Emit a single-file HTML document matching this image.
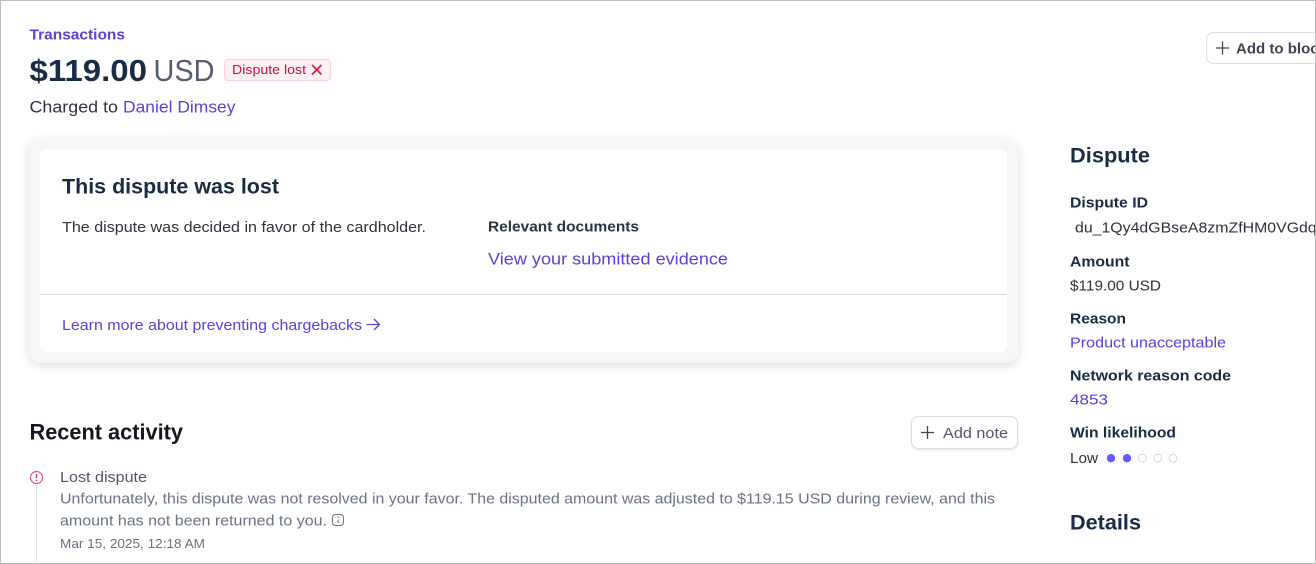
<!DOCTYPE html>
<html lang="en">
<head>
<meta charset="utf-8">
<title>Dispute</title>
<style>
html,body{margin:0;padding:0;background:#fff;width:1316px;height:564px;overflow:hidden}
#p{position:relative;width:1316px;height:564px;overflow:hidden}
.outer{position:absolute;left:29px;top:138.5px;width:988.5px;height:224.5px;border-radius:12px;background:#f5f6f8;box-shadow:0 3px 9px rgba(60,66,87,.15),0 0 18px rgba(60,66,87,.04)}
.inner{position:absolute;left:40px;top:149px;width:966.5px;height:203px;border-radius:6px;background:#fff}
.frame{position:absolute;left:0;top:0;border:1px solid #bdbdbd;width:1314px;height:562px;pointer-events:none}
svg{position:absolute;left:0;top:0}
text{font-family:"Liberation Sans",sans-serif}
.b{font-weight:700}
.nav{fill:#1a2b45}
.link{fill:#5b41d9}
</style>
</head>
<body>
<div id="p">
<div class="outer"></div>
<div class="inner"></div>
<svg width="1316" height="564" viewBox="0 0 1316 564" xmlns="http://www.w3.org/2000/svg">
<text x="29.5" y="39.5" font-size="14.5" class="b" fill="#5b41d9" textLength="95.5" lengthAdjust="spacingAndGlyphs">Transactions</text>
<text x="29.5" y="81" font-size="30.5" class="b nav" textLength="117.5" lengthAdjust="spacingAndGlyphs">$119.00</text>
<text x="153.5" y="81" font-size="30.5" fill="#565d72" textLength="61" lengthAdjust="spacingAndGlyphs">USD</text>
<rect x="224.5" y="59.5" width="106" height="21" rx="3.5" fill="#fdf0f3" stroke="#f8d3dc"/>
<text x="232" y="74" font-size="13" fill="#c0123f" textLength="74" lengthAdjust="spacingAndGlyphs">Dispute lost</text>
<path d="M312 65L321.5 74.5M321.5 65L312 74.5" stroke="#df1b41" stroke-width="1.6" fill="none"/>
<text x="29.5" y="112.5" font-size="16.5" fill="#30313d" textLength="88.5" lengthAdjust="spacingAndGlyphs">Charged to</text>
<text x="123" y="112.5" font-size="16.5" class="link" textLength="112.5" lengthAdjust="spacingAndGlyphs">Daniel Dimsey</text>

<text x="62" y="193.5" font-size="21.5" class="b nav" textLength="217" lengthAdjust="spacingAndGlyphs">This dispute was lost</text>
<text x="62" y="232" font-size="15" fill="#30313d" textLength="364" lengthAdjust="spacingAndGlyphs">The dispute was decided in favor of the cardholder.</text>
<text x="488" y="231.5" font-size="15" class="b" fill="#2a3445" textLength="151" lengthAdjust="spacingAndGlyphs">Relevant documents</text>
<text x="488" y="264.5" font-size="16.5" class="link" textLength="240" lengthAdjust="spacingAndGlyphs">View your submitted evidence</text>
<rect x="40" y="294" width="966.5" height="1" fill="#d8dae0"/>
<text x="62" y="330" font-size="15" class="link" textLength="300" lengthAdjust="spacingAndGlyphs">Learn more about preventing chargebacks</text>
<path d="M366.5 324.5H379M374 319L379.5 324.5L374 330" stroke="#5b41d9" stroke-width="1.3" fill="none"/>

<text x="29.5" y="439.5" font-size="22" class="b" fill="#14171f" textLength="153.5" lengthAdjust="spacingAndGlyphs">Recent activity</text>
<rect x="911.5" y="416.5" width="106" height="32" rx="7" fill="#fff" stroke="#dcdde2" style="filter:drop-shadow(0 1px 1px rgba(60,66,87,.14))"/>
<path d="M921 432.5H934M927.5 426V439" stroke="#414552" stroke-width="1.3" fill="none"/>
<text x="943" y="438" font-size="15" fill="#4f566b" textLength="65" lengthAdjust="spacingAndGlyphs">Add note</text>

<circle cx="36.5" cy="477.5" r="6" fill="none" stroke="#e5577a" stroke-width="1.2"/>
<path d="M36.5 474.3V478" stroke="#df1b41" stroke-width="1.3"/>
<circle cx="36.5" cy="480.3" r=".8" fill="#df1b41"/>
<rect x="36" y="486" width="1" height="78" fill="#e3e5ea"/>
<text x="60" y="482" font-size="15" fill="#4f566b" textLength="87" lengthAdjust="spacingAndGlyphs">Lost dispute</text>
<text x="60" y="503.5" font-size="15" fill="#6a7383" textLength="935" lengthAdjust="spacingAndGlyphs">Unfortunately, this dispute was not resolved in your favor. The disputed amount was adjusted to $119.15 USD during review, and this</text>
<text x="60" y="525.5" font-size="15" fill="#6a7383" textLength="267" lengthAdjust="spacingAndGlyphs">amount has not been returned to you.</text>
<rect x="332.5" y="514.5" width="11" height="11" rx="3" fill="none" stroke="#6a7383" stroke-width="1"/>
<path d="M338 519.5V523" stroke="#6a7383" stroke-width="1.1"/>
<circle cx="338" cy="517.3" r=".7" fill="#6a7383"/>
<text x="60" y="548" font-size="13" fill="#6a7383" textLength="145" lengthAdjust="spacingAndGlyphs">Mar 15, 2025, 12:18 AM</text>

<rect x="1206.5" y="32.5" width="140" height="31" rx="7" fill="#fff" stroke="#d8dde6"/>
<path d="M1216 48H1229M1222.5 41.5V54.5" stroke="#414552" stroke-width="1.3" fill="none"/>
<text x="1236" y="53.5" font-size="15" class="b" fill="#414552" textLength="91" lengthAdjust="spacingAndGlyphs">Add to block</text>

<text x="1070" y="162.5" font-size="21.5" class="b nav" textLength="80" lengthAdjust="spacingAndGlyphs">Dispute</text>
<text x="1070" y="207.5" font-size="15" class="b nav" textLength="78" lengthAdjust="spacingAndGlyphs">Dispute ID</text>
<text x="1075" y="232.5" font-size="15" fill="#30313d" textLength="247" lengthAdjust="spacingAndGlyphs">du_1Qy4dGBseA8zmZfHM0VGdqr</text>
<text x="1070" y="266.5" font-size="15" class="b nav" textLength="59.5" lengthAdjust="spacingAndGlyphs">Amount</text>
<text x="1070" y="290.5" font-size="15" fill="#30313d" textLength="91" lengthAdjust="spacingAndGlyphs">$119.00 USD</text>
<text x="1070" y="323.5" font-size="15" class="b nav" textLength="56" lengthAdjust="spacingAndGlyphs">Reason</text>
<text x="1070" y="347.5" font-size="15" class="link" textLength="156" lengthAdjust="spacingAndGlyphs">Product unacceptable</text>
<text x="1070" y="380.5" font-size="15" class="b nav" textLength="161" lengthAdjust="spacingAndGlyphs">Network reason code</text>
<text x="1070" y="404.5" font-size="15" class="link" textLength="38" lengthAdjust="spacingAndGlyphs">4853</text>
<text x="1070" y="437.5" font-size="15" class="b nav" textLength="106" lengthAdjust="spacingAndGlyphs">Win likelihood</text>
<text x="1070" y="463" font-size="15" fill="#30313d" textLength="28" lengthAdjust="spacingAndGlyphs">Low</text>
<circle cx="1111" cy="458.2" r="4.2" fill="#635bff"/>
<circle cx="1127" cy="458.2" r="4.2" fill="#635bff"/>
<circle cx="1142.3" cy="458.2" r="3.9" fill="#fff" stroke="#d5d7dd"/>
<circle cx="1157.7" cy="458.2" r="3.9" fill="#fff" stroke="#d5d7dd"/>
<circle cx="1173" cy="458.2" r="3.9" fill="#fff" stroke="#d5d7dd"/>
<text x="1070" y="529.5" font-size="21.5" class="b nav" textLength="71" lengthAdjust="spacingAndGlyphs">Details</text>
</svg>
<div class="frame"></div>
</div>
</body>
</html>
